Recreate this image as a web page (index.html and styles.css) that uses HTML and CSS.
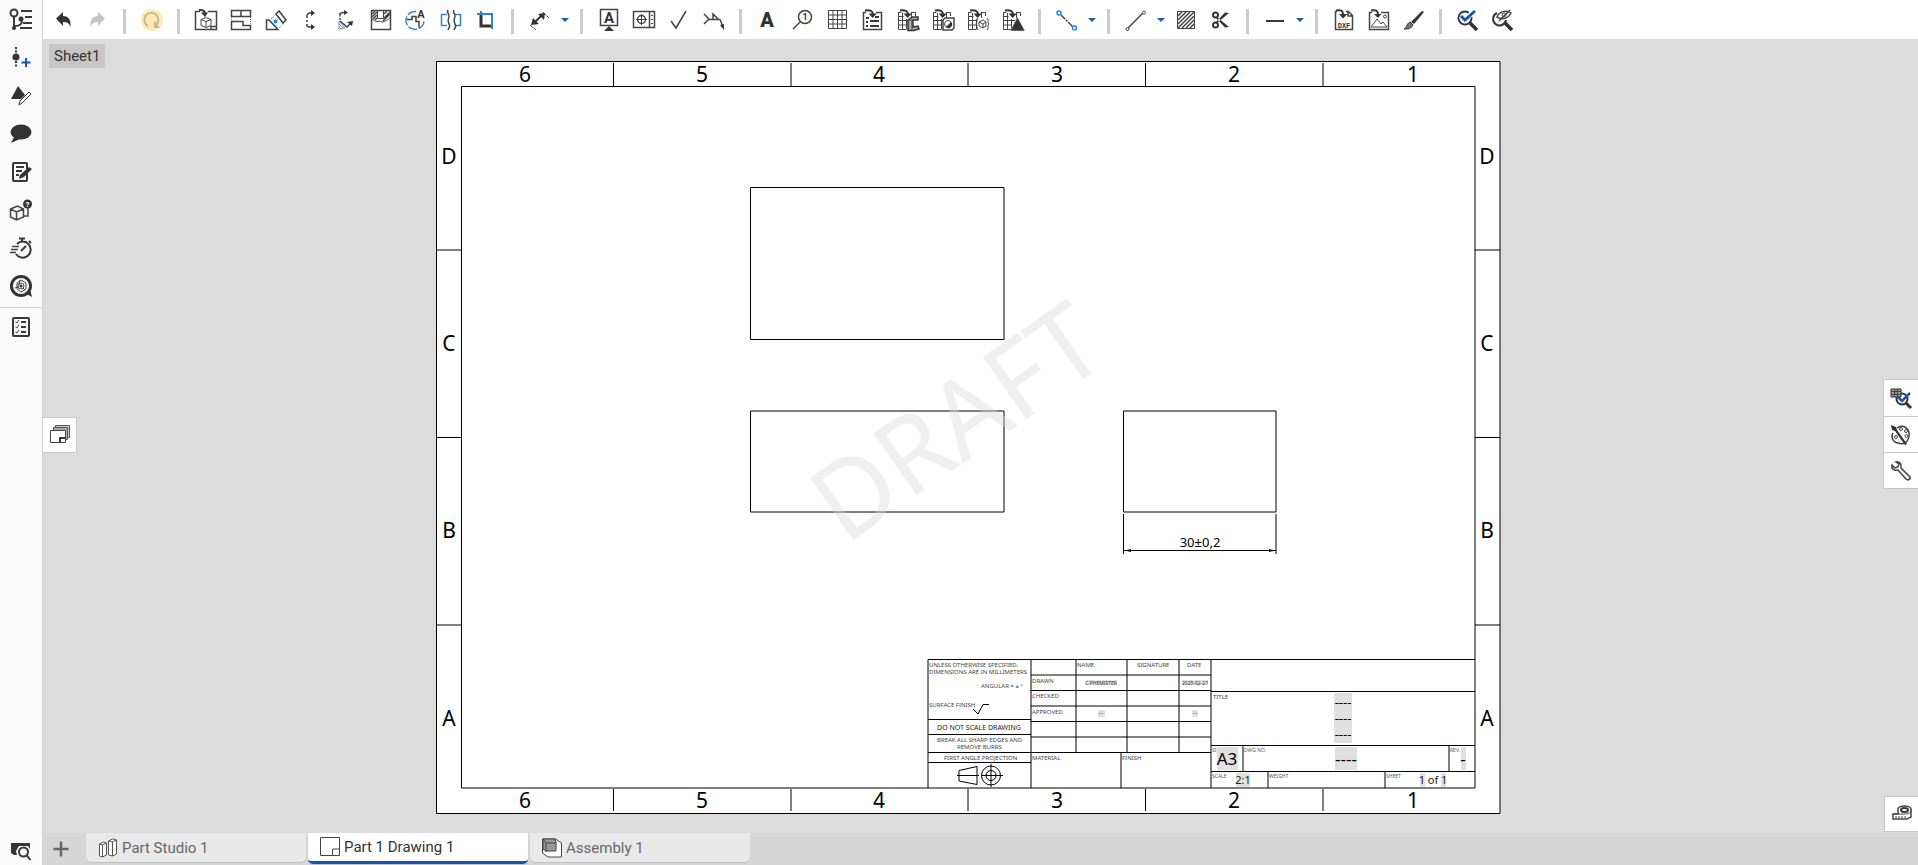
FILE: index.html
```html
<!DOCTYPE html>
<html lang="en">
<head>
  <meta charset="UTF-8">
  <meta name="viewport" content="width=device-width, initial-scale=1.0">
  <title>Part 1 Drawing 1</title>
  <link rel="stylesheet" href="styles.css">
</head>
<body>
  <!-- Shared icon parts -->
  <svg class="defs" width="0" height="0" aria-hidden="true">
    <symbol id="caret" viewBox="0 0 8 4"><path d="M0 0h8L4 4z" fill="#1b5faa"/></symbol>
    <symbol id="drop-arrow" viewBox="0 0 24 24"><path d="M4 2.500c5-1 8 .5 8 4" fill="none" stroke="#333" stroke-width="2"/><path d="M7.500 5.500h8.500l-4.500 4.500z" fill="#333"/></symbol>
    <symbol id="table-base" viewBox="0 0 24 24"><path d="M2.500 4v17.500h8M2.500 4.500h3M15 4.500h4.500V8M2.500 8.500h5M2.500 12.500h12M2.500 17h8M6.500 5v16M10.500 11v10M15.500 5v6" fill="none" stroke="#444"/><use href="#drop-arrow"/></symbol>
  </svg>

  <div class="app">
    <aside class="rail">
      <button class="rail-btn" aria-label="Feature list"><svg viewBox="0 0 24 24"><circle cx="5" cy="5" r="3.500" class="ln2"/><path d="M5 9v11M5 18c7 0 8-2 8-7" class="ln2"/><circle cx="5" cy="20" r="2" class="fl"/><circle cx="12" cy="11" r="2.500" class="fl"/><path d="M12 3h11M16 9h7M14 15h9M11 20h12" class="ln2"/></svg></button>
      <button class="rail-btn" aria-label="Add version"><svg viewBox="0 0 24 24"><circle cx="7" cy="11" r="3.500" class="fl"/><path d="M7 1v21" class="ln2" stroke-dasharray="2 1.500"/><path d="M17 12v9M12.500 16.500h9" stroke="#1a53b5" stroke-width="2"/></svg></button>
      <button class="rail-btn" aria-label="Revisions"><svg viewBox="0 0 24 24"><path d="M9 2l7 9-4 4H2z" class="fl"/><path d="M10 21l1-4 9-9 2 2-9 9z" fill="#fff" stroke="#333"/></svg></button>
      <button class="rail-btn" aria-label="Comments"><svg viewBox="0 0 24 24"><ellipse cx="12" cy="10" rx="10.500" ry="7.500" class="fl"/><path d="M5 15l-3 6 9-4z" class="fl"/></svg></button>
      <button class="rail-btn" aria-label="Notes"><svg viewBox="0 0 24 24"><rect x="4" y="3" width="14" height="18" rx="1" class="ln2"/><path d="M7 7h8M7 11h6M7 15h3" class="ln2"/><path d="M10 19l1-4 9-8 3 2-8 8z" class="fl"/></svg></button>
      <button class="rail-btn" aria-label="Part properties"><svg viewBox="0 0 24 24"><path d="M1.500 11l7-3 6 3v8l-7 3-6-3zM1.500 11l6 3 7-3M7.500 14v8M14 18h5v-8" class="mid"/><circle cx="18.500" cy="6" r="4.500" class="fl"/><text class="glyph glyph-help" x="18.500" y="9">?</text></svg></button>
      <button class="rail-btn" aria-label="Performance"><svg viewBox="0 0 24 24"><path d="M8 8a8 8 0 1 1-1 10M10 2.500h6M13 3v3M20 5l2 2" class="ln2"/><path d="M12 15l5-5" class="ln2"/><path d="M3 10.500h7M2 13.500h7M1 16.500h6" class="mid"/></svg></button>
      <button class="rail-btn" aria-label="Learning center"><svg viewBox="0 0 24 24"><circle cx="12" cy="12" r="9.500" fill="none" stroke="#333" stroke-width="3"/><path d="M16 19l7 4-2-8z" class="fl"/><path d="M8 9l4-3 5 3v6l-5 3-4-3zM6 14l3-1M11 6l-1 5M16 16l-2-2" class="ln"/><circle cx="12" cy="12" r="3" class="ln"/><circle cx="12" cy="12" r="1.500" class="fl"/></svg></button>
      <div class="rail-group">
        <button class="rail-btn" aria-label="Checklist"><svg viewBox="0 0 24 24"><rect x="4" y="3" width="16" height="18" rx="1" class="ln2"/><path d="M12 7h5M12 12h5M12 17h5" class="ln2"/><path d="M6.500 7l1.500 1 2-3M6.500 12l1.500 1 2-3M6.500 17l1.500 1 2-3" class="ln"/></svg></button>
      </div>
      <button class="rail-btn rail-last" aria-label="Search tabs"><svg viewBox="0 0 24 24"><path d="M2 4h19v6l-2-3h-9l-3 5 1 4H5l-3-2z" class="fl"/><circle cx="14.500" cy="13" r="4.500" class="ln2"/><path d="M17.500 16l4 5" class="ln2"/></svg></button>
    </aside>

    <main class="workspace">
      <div class="toolbar">
        <button class="tool" aria-label="Undo"><svg viewBox="0 0 24 24"><path d="M5 10.500L12 4v4c6 0 8 4 7.500 11-1.500-4-3.500-5-7.500-5v4z" class="fl"/></svg></button>
        <button class="tool" aria-label="Redo"><svg viewBox="0 0 24 24"><path d="M19 10.500L12 4v4c-6 0-8 4-7.500 11 1.500-4 3.500-5 7.500-5v4z" fill="#c4c4c4"/></svg></button>
        <span class="sep"></span>
        <button class="tool" aria-label="Update drawing"><svg viewBox="0 0 24 24"><circle cx="12" cy="12" r="11" fill="#ffe9b3"/><path d="M8 18a7 7 0 1 1 8-1" fill="none" stroke="#c5b994" stroke-width="2"/><path d="M14 13v7h6z" fill="#c5b994"/></svg></button>
        <span class="sep"></span>
        <button class="tool" aria-label="Insert view"><svg viewBox="0 0 24 24"><path d="M6 3.500H1.500v18h21v-18H14M17 21.500v-3h5" class="mid"/><path d="M7 11.500l5-2 5 2v6l-5 2-5-2zM7 11.500l5 2 5-2M12 13v6" class="ln"/><path d="M5 2c4-.500 6 1 6 4" class="ln2"/><path d="M7 4.500h7L11 9z" class="fl"/></svg></button>
        <button class="tool" aria-label="Projected view"><svg viewBox="0 0 24 24"><path d="M2.500 2.500h19v6h-19zM12 2.500v6M2.500 13.500H14v4h7.500v4h-19z" class="mid"/><path d="M2.500 9v4M21.500 9v8" stroke="#2b87d1" stroke-dasharray="1 1"/></svg></button>
        <button class="tool" aria-label="Auxiliary view"><svg viewBox="0 0 24 24"><path d="M2.500 12v9.500H14L5 12zM12 6l3-3 7 9-3 3z" class="mid"/><path d="M7 11l5-5M15 20l6-6" stroke="#2b87d1" stroke-dasharray="1 1"/><circle cx="11.500" cy="13.500" r="2" fill="#2b87d1"/><path d="M8 17l7-7" stroke="#2b87d1" stroke-dasharray="2 1"/></svg></button>
        <button class="tool" aria-label="Section view"><svg viewBox="0 0 24 24"><path d="M12 5h-2l-2 2v3M8 12v2M8 16v2l2 1h2" class="mid"/><path d="M12 2l4 3-4 3zM12 16l4 3-4 3z" class="fl"/></svg></button>
        <button class="tool" aria-label="Aligned section view"><svg viewBox="0 0 24 24"><path d="M12 4.500h-3l-3 1v3M6 10v2M6 13l7 6 4-4" class="mid"/><path d="M10 2l4 2.500-4 2.500zM13 14l6-1-1 5z" class="fl"/><path d="M5 13v8l6-1-6-7M5 16l4 4M5 19l2 2" fill="none" stroke="#6c8ecb"/></svg></button>
        <button class="tool" aria-label="Broken-out section"><svg viewBox="0 0 24 24"><path d="M2.500 2.500h19v19h-19z" class="mid"/><path d="M2.500 12c3-1 4 3 8 1 4 3 9-2 11-4M8.500 2.500v8h6v-8" class="ln"/><path d="M3 6l3-3M3 9l5-5M4 11l4-4M6 12l2-2M15 6l3-3M15 10l6-6M14 13l7-7" class="mid"/></svg></button>
        <button class="tool" aria-label="Detail view"><svg viewBox="0 0 24 24"><path d="M12 3.500A9 9 0 1 0 20 12" fill="none" stroke="#2b87d1" stroke-width="1.500" stroke-dasharray="9 2"/><path d="M3 11.500h5v-3h4v5h3v6" class="mid"/><text class="glyph glyph-sm" x="17" y="10">A</text></svg></button>
        <button class="tool" aria-label="Break view"><svg viewBox="0 0 24 24"><path d="M8 6.500H2.500v11H8M16 6.500h5.500v11H16" fill="none" stroke="#2b87d1" stroke-width="1.500"/><path d="M9 2c-2 3 2 4 1 7s-2 4 0 7 0 3-1 6M15 2c-2 3 2 4 1 7s-2 4 0 7 0 3-1 6" class="mid"/></svg></button>
        <button class="tool" aria-label="Crop view"><svg viewBox="0 0 24 24"><path d="M7 6v12h12" fill="none" stroke="#333" stroke-width="3"/><path d="M3 6h15v15M7 3v3" fill="none" stroke="#2b87d1" stroke-width="2"/></svg></button>
        <span class="sep"></span>
        <button class="tool" aria-label="Dimension"><svg viewBox="0 0 24 24"><path d="M6 15l9-9" class="ln2"/><path d="M3 17l2-7 6 6zM17 5l-7 1 6 6z" class="fl"/><path d="M2 17l6 5M15 4l6 6" class="ln" stroke-dasharray="4 1"/></svg></button>
        <button class="more" aria-label="More dimensions"><svg><use href="#caret"/></svg></button>
        <span class="sep"></span>
        <button class="tool" aria-label="Datum"><svg viewBox="0 0 24 24"><rect x="3.500" y="1.500" width="17" height="16" class="mid"/><path d="M12 18l5 5H7z" class="fl"/><text class="glyph glyph-md" x="12" y="15">A</text></svg></button>
        <button class="tool" aria-label="Geometric tolerance"><svg viewBox="0 0 24 24"><path d="M1.500 3.500h21v16h-21zM17.500 3.500v16" class="mid"/><circle cx="9.500" cy="11.500" r="4" class="mid"/><path d="M4 11.500h11M9.500 6v11M19 7.500h2M19 11.500h2M19 15.500h2" class="ln"/></svg></button>
        <button class="tool" aria-label="Surface finish"><svg viewBox="0 0 24 24"><path d="M4 13l5 7 10-17" class="mid"/></svg></button>
        <button class="tool" aria-label="Weld symbol"><svg viewBox="0 0 24 24"><path d="M2 6l5 5-5 5M6 11.500h12l3 7M11 11V6l5 5" class="mid"/><path d="M18 17l4 5v-6z" class="fl"/></svg></button>
        <span class="sep"></span>
        <button class="tool" aria-label="Note"><svg viewBox="0 0 24 24"><text class="glyph glyph-lg" x="11" y="19">A</text></svg></button>
        <button class="tool" aria-label="Callout"><svg viewBox="0 0 24 24"><circle cx="14" cy="9" r="6.500" class="mid"/><path d="M9 14l-7 7" class="mid"/><text class="glyph glyph-one" x="14" y="12">1</text></svg></button>
        <button class="tool" aria-label="Table"><svg viewBox="0 0 24 24"><path d="M2.500 2.500h18v18h-18zM2.500 7h18M2.500 11.500h18M2.500 16h18M7 2.500v18M11.500 2.500v18M16 2.500v18" class="ln"/></svg></button>
        <button class="tool" aria-label="Bill of materials"><svg viewBox="0 0 24 24"><path d="M5 4.500H2.500v17h18v-17H15" class="mid"/><path d="M5 10h3M14 9h4M5 14h2M9 13h9M5 18h2M9 18h9" class="ln2"/><use href="#drop-arrow"/></svg></button>
        <button class="tool" aria-label="Cut list"><svg viewBox="0 0 24 24"><use href="#table-base"/><path d="M12 12l4-3h6v3h-5v7l5-1 1 3-5 1.500h-6z" fill="#aaa" stroke="#333" stroke-width="1.500"/><path d="M12 12h4v10" class="ln"/></svg></button>
        <button class="tool" aria-label="Hole table"><svg viewBox="0 0 24 24"><use href="#table-base"/><path d="M12 12l2-2h9v10l-2 2h-9z" fill="#fff" stroke="#444" stroke-width="1.500"/><circle cx="17" cy="16" r="3.500" fill="#fff" stroke="#444"/><path d="M20 14a3.500 3.500 0 0 1-5 5z" class="fl"/></svg></button>
        <button class="tool" aria-label="Revision list"><svg viewBox="0 0 24 24"><use href="#table-base"/><path d="M11 10h12v13H11z" fill="#fff"/><path d="M12 10c-2 1 0 4-2 6 2 1 0 5 2 6M21 10c2 1 0 4 2 6-2 1 0 5-2 6M13 14l4-2 3 2v4l-3 2-4-2zM13 14l4 2 3-2M17 16v4" class="ln"/></svg></button>
        <button class="tool" aria-label="Revision table"><svg viewBox="0 0 24 24"><use href="#table-base"/><path d="M9 23l7.500-14L24 23z" fill="#333" stroke="#fff" stroke-width=".5"/></svg></button>
        <span class="sep"></span>
        <button class="tool" aria-label="Centerline"><svg viewBox="0 0 24 24"><path d="M6 7l12 12" class="mid" stroke-dasharray="6 1 2 1"/><circle cx="4" cy="5" r="2" fill="#fff" stroke="#2b87d1" stroke-width="1.500"/><circle cx="19.500" cy="20" r="2" fill="#fff" stroke="#2b87d1" stroke-width="1.500"/></svg></button>
        <button class="more" aria-label="More centerlines"><svg><use href="#caret"/></svg></button>
        <span class="sep"></span>
        <button class="tool" aria-label="Line"><svg viewBox="0 0 24 24"><path d="M4 20L19 5" class="mid"/><circle cx="3.500" cy="21" r="1.500" fill="#fff" stroke="#444"/><circle cx="20" cy="4.500" r="1.500" fill="#fff" stroke="#444"/></svg></button>
        <button class="more" aria-label="More lines"><svg><use href="#caret"/></svg></button>
        <button class="tool" aria-label="Hatch"><svg viewBox="0 0 24 24"><path d="M3.500 3.500h17v17h-17z" class="ln"/><path d="M4 8l4-4M4 12l8-8M4 16l12-12M4 20L20 4M8 20L20 8M12 20l8-8M16 20l4-4" class="mid"/></svg></button>
        <button class="tool" aria-label="Trim"><svg viewBox="0 0 24 24"><circle cx="6.500" cy="7" r="2.500" class="ln2"/><circle cx="6.500" cy="17" r="2.500" class="ln2"/><path d="M8 9l12 10-4 .500L7 10zM8 15L20 5l-4-.500L7 14z" class="fl"/></svg></button>
        <span class="sep"></span>
        <button class="tool" aria-label="Line style"><svg viewBox="0 0 24 24"><path d="M3 13h18" class="ln2"/></svg></button>
        <button class="more" aria-label="More line styles"><svg><use href="#caret"/></svg></button>
        <span class="sep"></span>
        <button class="tool" aria-label="Insert DXF"><svg viewBox="0 0 24 24"><path d="M5 3.500H3.500v18h17V7.500l-4-4H14M16 3.500V8h4" class="mid"/><path d="M4 2.500c5-1 7 0 7 4" class="ln2"/><path d="M7 6h8.500L11 10.500z" class="fl"/><text class="glyph glyph-dxf" x="12" y="20">DXF</text></svg></button>
        <button class="tool" aria-label="Insert image"><svg viewBox="0 0 24 24"><path d="M5 4.500H2.500v17h19v-17H14" class="mid"/><path d="M4 19l6-8 4 5 2-2 4 5z" class="ln"/><circle cx="18" cy="8.500" r="1.500" class="ln"/><path d="M4 2.500c5-1 7 0 7 4" class="ln2"/><path d="M7 6h7.500L11 10z" class="fl"/></svg></button>
        <button class="tool" aria-label="Format painter"><svg viewBox="0 0 24 24"><path d="M9 14L20 3l2 1-10 12z" class="fl"/><path d="M8 14l3 3c-2 4-5 4-9 4 3-1 2-5 6-7z" fill="#777" stroke="#333"/></svg></button>
        <span class="sep"></span>
        <button class="tool" aria-label="Inspect drawing"><svg viewBox="0 0 24 24"><circle cx="9" cy="10" r="6.500" class="ln2"/><path d="M14 15l7 7" fill="none" stroke="#333" stroke-width="3.500"/><path d="M5 8l4 4L19 2" fill="none" stroke="#fff" stroke-width="5"/><path d="M5 8l4 4L19 3" fill="none" stroke="#1a53b5" stroke-width="3"/></svg></button>
        <button class="tool" aria-label="Hide inspection"><svg viewBox="0 0 24 24"><path d="M6 5a6.500 6.500 0 1 0 9 7" class="ln2"/><path d="M14 15l7 7" fill="none" stroke="#333" stroke-width="3.500"/><path d="M6 9c2-6 10-7 14-4-3 6-9 7-14 4zM8 13L19 2" class="mid"/><circle cx="13" cy="7" r="2" class="ln"/></svg></button>
      </div>

      <section class="canvas">
        <button class="sheet-name">Sheet1</button>
        <svg class="sheet" viewBox="435 60 1068 755" role="img" aria-label="Drawing sheet">
          <!-- Border and zones -->
          <path class="paper" d="M436.500 61.500H1500V813.500H436.500z"/>
          <path class="line" d="M461.500 86.500H1475V788H461.500z"/>
          <path class="line" d="M613.500 63V86M791 63V86M968 63V86M1145.500 63V86M1323 63V86M613.500 789V811M791 789V811M968 789V811M1145.500 789V811M1323 789V811"/>
          <path class="line" d="M437 250H461M437 437.500H461M437 625H461M1475 250H1500M1475 437.500H1500M1475 625H1500"/>
          <g class="zone">
            <text x="525" y="82">6</text><text x="702" y="82">5</text><text x="879" y="82">4</text><text x="1057" y="82">3</text><text x="1234" y="82">2</text><text x="1413" y="82">1</text>
            <text x="525" y="808">6</text><text x="702" y="808">5</text><text x="879" y="808">4</text><text x="1057" y="808">3</text><text x="1234" y="808">2</text><text x="1413" y="808">1</text>
            <text x="449" y="164">D</text><text x="449" y="351">C</text><text x="449" y="538">B</text><text x="449" y="726">A</text>
            <text x="1487" y="164">D</text><text x="1487" y="351">C</text><text x="1487" y="538">B</text><text x="1487" y="726">A</text>
          </g>

          <!-- Views -->
          <path class="line" d="M750.500 187.500H1004V339.500H750.500zM750.500 411H1004V512H750.500zM1123.500 411H1276V512H1123.500z"/>
          <path class="line" d="M1123.500 514V554M1276 514V554M1124 550.500h152"/>
          <path d="M1125 550.500l6-1.500v3zM1275 550.500l-6-1.500v3z"/>
          <text class="dim" x="1200" y="547">30±0,2</text>
          <text class="watermark" transform="translate(845 546) rotate(-35)">DRAFT</text>

          <!-- Title block -->
          <path class="line" d="M928 788V659.500H1475M1031 659V788M928 719.500H1031M928 734.500H1031M928 752.500H1211M928 762.500H1031"/>
          <path class="line" d="M1031 675H1211M1031 690.500H1211M1031 706H1211M1031 721.500H1211M1031 737H1211M1076 659V752M1127 659V752M1179 659V752M1211 659V788M1121 752V788"/>
          <path class="line" d="M1211 691.500H1475M1211 745.500H1475M1211 771.500H1475M1243 745V771M1449 745V771M1268 771V788M1385 771V788"/>
          <g class="field">
            <rect x="1086" y="680" width="31" height="5"/><rect x="1182" y="680" width="26" height="5"/>
            <rect x="1098" y="710" width="7" height="7"/><rect x="1192" y="710" width="6" height="7"/>
            <rect x="1334" y="693" width="18" height="50"/><rect x="1335" y="747" width="22" height="23"/>
            <rect x="1217" y="747" width="21" height="23"/><rect x="1461" y="747" width="5" height="23"/>
            <rect x="1236" y="773" width="14" height="14"/><rect x="1420" y="773" width="5" height="14"/><rect x="1441" y="773" width="5" height="14"/>
          </g>
          <g class="micro">
            <text x="1212" y="752">SI</text><text x="1244" y="752">DWG NO.</text><text x="1450" y="752">REV.</text>
            <text x="1212" y="778">SCALE</text><text x="1269" y="778">WEIGHT</text><text x="1386" y="778">SHEET</text>
          </g>
          <g class="tiny">
            <text x="929" y="667">UNLESS OTHERWISE SPECIFIED,</text>
            <text x="929" y="674">DIMENSIONS ARE IN MILLIMETERS</text>
            <text x="981" y="688">ANGULAR = ± °</text>
            <text x="929" y="707">SURFACE FINISH</text>
            <text x="937" y="742">BREAK ALL SHARP EDGES AND</text>
            <text x="957" y="749">REMOVE BURRS</text>
            <text x="944" y="760">FIRST ANGLE PROJECTION</text>
            <text x="1032" y="683">DRAWN</text><text x="1032" y="698">CHECKED</text><text x="1032" y="714">APPROVED</text>
            <text x="1077" y="667">NAME</text><text x="1137" y="667">SIGNATURE</text><text x="1187" y="667">DATE</text>
            <text x="1032" y="760">MATERIAL</text><text x="1122" y="760">FINISH</text><text x="1213" y="699">TITLE</text>
          </g>
          <g class="value">
            <text x="1101" y="685">C.PHEMISTER</text><text x="1195" y="685">2025-02-27</text>
            <text x="1101" y="715">---</text><text x="1195" y="715">---</text>
          </g>
          <text class="scale-note" x="979" y="730">DO NOT SCALE DRAWING</text>
          <g class="dashes"><text x="1343" y="707">----</text><text x="1343" y="723">----</text><text x="1343" y="739">----</text></g>
          <g class="dashes-lg"><text x="1346" y="765">----</text><text x="1463" y="765">-</text></g>
          <text class="size" x="1227" y="765">A3</text>
          <text class="ratio" x="1243" y="784">2:1</text><text class="ratio" x="1433" y="784">1 of 1</text>
          <path class="sym" d="M973 709l5 5 5-9.500h6"/>
          <path class="sym" d="M959 770.500L977 766.500V784.500L959 781zM957 775.500H979M981 775.500H1003M991 764V787"/>
          <circle class="sym" cx="991" cy="775.500" r="9.500"/><circle class="sym" cx="991" cy="775.500" r="5"/>
        </svg>

        <button class="flap flap-left" aria-label="Sheets"><svg viewBox="0 0 24 24"><path d="M7.500 5.500v-3h14v12H19" fill="#ccc" stroke="#555"/><path d="M5.500 7.500v-3h14v12H17" fill="#aaa" stroke="#555"/><path d="M2.500 7.500h15v12h-15z" fill="#fff" stroke="#444"/><path d="M12 19v-4h5" class="ln2"/></svg></button>
        <div class="flap-group">
          <button class="flap" aria-label="Inspection panel"><svg viewBox="0 0 24 24"><circle cx="13" cy="13" r="5.500" fill="#fff" stroke="#333" stroke-width="2"/><path d="M2 3h10v8H2z" fill="#999" stroke="#333"/><path d="M2 5.500h10M2 8.500h10M5.500 3v8M8.500 3v8" class="ln"/><path d="M17 17l5 5" fill="none" stroke="#333" stroke-width="3"/><path d="M9 11l4 4 8-8" fill="none" stroke="#1a53b5" stroke-width="2.500"/></svg></button>
          <button class="flap" aria-label="Styles panel"><svg viewBox="0 0 24 24"><path d="M8 5c6-4 13 0 12 8-1 7-6 9-11 7-6-1-7-7-5-10" class="mid"/><circle cx="12" cy="6" r="1.500" class="ln"/><circle cx="17" cy="8" r="1.500" class="ln"/><circle cx="17.500" cy="13" r="1.500" class="ln"/><circle cx="7" cy="14" r="1.500" class="ln"/><path d="M2 2l5 2 1 3 10 14-2 1L6 8 3 7z" class="fl"/></svg></button>
          <button class="flap" aria-label="Tools panel"><svg viewBox="0 0 24 24"><path d="M7 3c4-1 6 3 5 6l9 9c1 2-2 4-4 2l-8-9c-4 1-7-1-6-5l3 3 3-1 1-3z" class="mid"/></svg></button>
        </div>
        <button class="flap flap-bottom" aria-label="Measure"><svg viewBox="0 0 24 24"><path d="M8 12V7c1-4 12-4 13 0v8l-4 2H3v-5z" class="mid"/><ellipse cx="14.500" cy="8" rx="3.500" ry="2" class="ln2"/><path d="M3 12h11c4 0 7-1 7-4M6 14v2M9 14v2M12 14v2M15 14v2" class="ln"/></svg></button>
      </section>

      <nav class="tabs">
        <button class="add-tab" aria-label="Add tab"><svg viewBox="0 0 24 24"><path d="M12 3v18M3 12h18" stroke="#666" stroke-width="3"/></svg></button>
        <a class="tab" href="#part-studio"><svg viewBox="0 0 20 20"><path d="M1.500 6l4-2 3 1v12l-4 2-3-1zM1.500 6l3 1 4-2M4.500 7v12M10.500 3l4-2 4 1v14l-4 2-4-1zM10.500 3l4 1 4-2M14.500 4v14" fill="#fff" stroke="#555"/></svg>Part Studio 1</a>
        <a class="tab active" href="#drawing"><svg viewBox="0 0 20 20"><path d="M.5 .5h19v18H.5zM12.500 18v-6h7" fill="#fff" stroke="#444"/></svg>Part 1 Drawing 1</a>
        <a class="tab" href="#assembly"><svg viewBox="0 0 20 20"><path d="M.5 1h13l6 4v14H6l-5.500-4z" fill="#fff" stroke="#444"/><path d="M1 1h12l1 3v9H4L1 11z" fill="#999" stroke="#444"/><path d="M1 1l3 4h10M4 5v9" class="ln"/></svg>Assembly 1</a>
      </nav>
    </main>
  </div>
</body>
</html>
```
FILE: styles.css
```css
/* Reset and Global Styles */
* {
  margin: 0;
  padding: 0;
  box-sizing: border-box;
}

body {
  font-family: Roboto, 'Noto Sans', sans-serif;
  font-size: 15px;
  color: #333;
  background: #dcdcdc;
  overflow: hidden;
}

button {
  background: none;
  border: none;
  font: inherit;
  color: inherit;
  cursor: pointer;
}

svg {
  display: block;
}

.defs {
  position: absolute;
}

/* Icon strokes and letters */
.ln {
  fill: none;
  stroke: #444;
}

.mid {
  fill: none;
  stroke: #444;
  stroke-width: 1.5;
}

.ln2 {
  fill: none;
  stroke: #383838;
  stroke-width: 2;
}

.fl {
  fill: #333;
}

.glyph {
  font-weight: bold;
  text-anchor: middle;
  fill: #333;
}

.glyph-sm {
  font-size: 11px;
}

.glyph-md {
  font-size: 15px;
}

.glyph-lg {
  font-size: 20px;
  font-weight: 900;
}

.glyph-one {
  font-size: 9px;
}

.glyph-help {
  font-size: 8px;
  fill: #fff;
}

.glyph-dxf {
  font-family: 'Liberation Mono', monospace;
  font-size: 7px;
}

.app {
  display: flex;
  height: 100vh;
}

/* Left rail */
.rail {
  display: flex;
  flex-direction: column;
  flex: none;
  width: 43px;
  padding-top: 1px;
  background: #fafafa;
  border-right: 1px solid #d2d2d2;
}

.rail-btn {
  display: flex;
  align-items: center;
  justify-content: center;
  width: 100%;
  height: 38px;
}

.rail-btn svg,
.tool svg,
.flap svg {
  width: 24px;
  height: 24px;
}

.rail-group {
  margin-top: 2px;
  border-top: 1px solid #d2d2d2;
}

.rail-last {
  height: 28px;
  margin-top: auto;
}

/* Toolbar */
.workspace {
  display: flex;
  flex-direction: column;
  flex: 1;
  min-width: 0;
}

.toolbar {
  display: flex;
  align-items: center;
  flex: none;
  height: 39px;
  padding: 1px 0 0 2px;
  background: #fff;
}

.tool {
  display: flex;
  align-items: center;
  justify-content: center;
  flex: none;
  width: 35px;
  height: 32px;
}

.more {
  display: flex;
  align-items: center;
  justify-content: center;
  flex: none;
  width: 15px;
  height: 32px;
}

.more svg {
  width: 8px;
  height: 4px;
}

.sep {
  flex: none;
  width: 3px;
  height: 25px;
  margin: 2px 8px 0;
  background: #ccc;
}

/* Drawing canvas */
.canvas {
  position: relative;
  flex: 1;
  min-height: 0;
  padding: 21px 23px 18px 0;
}

.sheet-name {
  position: absolute;
  top: 5px;
  left: 6px;
  height: 24px;
  padding: 0 5px;
  background: #c6c6c6;
}

.sheet {
  width: 100%;
  height: 100%;
  font-family: 'Noto Sans', sans-serif;
}

.paper {
  fill: #fff;
  stroke: #000;
}

.line,
.sym {
  fill: none;
  stroke: #000;
}

.zone,
.dim,
.scale-note,
.value,
.dashes,
.dashes-lg,
.size,
.ratio {
  text-anchor: middle;
}

.zone {
  font-size: 21px;
}

.dim {
  font-size: 13px;
}

.watermark {
  font-size: 106px;
  fill: #d8d8d8;
  opacity: 0.4;
}

.field {
  fill: #e0e0e0;
}

.tiny {
  font-size: 6px;
  fill: #444;
}

.micro {
  font-size: 5px;
  fill: #555;
}

.value {
  font-size: 5px;
  fill: #333;
}

.scale-note {
  font-size: 7px;
  fill: #222;
}

.dashes {
  font-size: 13px;
}

.dashes-lg,
.size {
  font-size: 17px;
}

.ratio {
  font-size: 11px;
  fill: #222;
}

/* Flaps over the canvas edges */
.flap {
  display: flex;
  align-items: center;
  justify-content: center;
  width: 34px;
  height: 36px;
  background: #fff;
}

.flap-left {
  position: absolute;
  top: 378px;
  left: 0;
  border: 1px solid #c8c8c8;
  border-left: none;
}

.flap-group {
  position: absolute;
  top: 340px;
  right: 0;
  border: 1px solid #c8c8c8;
  border-right: none;
}

.flap-group .flap + .flap {
  border-top: 1px solid #c8c8c8;
}

.flap-bottom {
  position: absolute;
  right: 0;
  bottom: 1px;
  border: 1px solid #c8c8c8;
  border-right: none;
}

/* Tab bar */
.tabs {
  display: flex;
  gap: 2px;
  flex: none;
  height: 32px;
  background: #d6d6d6;
}

.add-tab {
  display: flex;
  align-items: center;
  width: 41px;
  padding-left: 8px;
}

.add-tab svg {
  width: 20px;
  height: 20px;
}

.tab {
  display: flex;
  align-items: center;
  gap: 4px;
  width: 220px;
  height: 29px;
  padding-left: 12px;
  background: #e9e9e9;
  border-radius: 0 0 5px 5px;
  box-shadow: 0 1px 1px #c0c0c0;
  color: #666;
  text-decoration: none;
}

.tab svg {
  width: 20px;
  height: 20px;
}

.tab.active {
  height: 31px;
  background: #fff;
  border-bottom: 3px solid #1651b0;
  color: #333;
}
```
